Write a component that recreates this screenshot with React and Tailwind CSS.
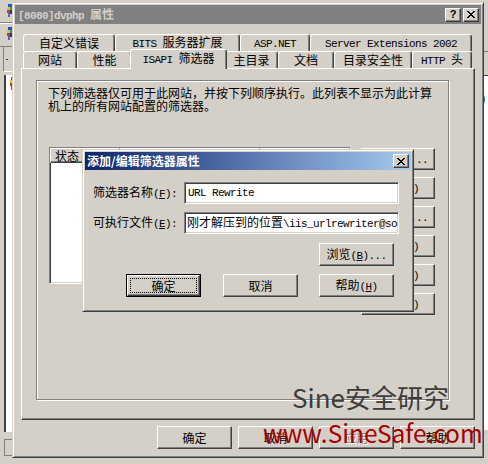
import React from 'react';

// classic win2k bevels
const raised =
  'border border-t-white border-l-white border-r-[#404040] border-b-[#404040] shadow-[inset_-1px_-1px_0_#808080]';
const sunken =
  'border border-t-[#808080] border-l-[#808080] border-r-white border-b-white shadow-[inset_1px_1px_0_#404040,inset_-1px_-1px_0_#d4d0c8]';
const frame =
  'border border-t-[#d4d0c8] border-l-[#d4d0c8] border-r-[#404040] border-b-[#404040] shadow-[inset_1px_1px_0_#fff,inset_-1px_-1px_0_#808080]';
const tab =
  'bg-[#d4d0c8] border-t border-l border-r border-t-white border-l-white border-r-[#404040] shadow-[inset_-1px_0_0_#808080] rounded-t-[3px] flex items-center justify-center whitespace-nowrap';

const L = ({ children, className = '' }) => (
  <span className={`font-['Liberation_Mono',monospace] text-[11px] tracking-[-0.6px] ${className}`}>
    {children}
  </span>
);

const XGlyph = () => (
  <svg width="8" height="7" viewBox="0 0 8 7" shapeRendering="crispEdges" fill="#000">
    <rect x="0" y="0" width="2" height="1" />
    <rect x="6" y="0" width="2" height="1" />
    <rect x="1" y="1" width="2" height="1" />
    <rect x="5" y="1" width="2" height="1" />
    <rect x="2" y="2" width="4" height="1" />
    <rect x="3" y="3" width="2" height="1" />
    <rect x="2" y="4" width="4" height="1" />
    <rect x="1" y="5" width="2" height="1" />
    <rect x="5" y="5" width="2" height="1" />
    <rect x="0" y="6" width="2" height="1" />
    <rect x="6" y="6" width="2" height="1" />
  </svg>
);

const CapButton = ({ children }) => (
  <div className={`w-[16px] h-[14px] bg-[#d4d0c8] flex items-center justify-center ${raised}`}>
    {children}
  </div>
);

const Button = ({ children, size = 'w-[75px] h-[23px]', className = '', disabled = false }) => (
  <div
    className={`${size} bg-[#d4d0c8] flex items-center justify-center whitespace-nowrap leading-[13px] ${raised} ${
      disabled ? 'text-[#808080] [text-shadow:1px_1px_0_#fff]' : ''
    } ${className}`}
  >
    <span>{children}</span>
  </div>
);

const DefaultButton = ({ children, className = '' }) => (
  <div className={`w-[75px] h-[23px] border border-black flex ${className}`}>
    <div className={`flex-1 flex bg-[#d4d0c8] ${raised}`}>
      <div className="flex-1 m-[2px] border border-dotted border-black flex items-center justify-center leading-[13px]">
        <span>{children}</span>
      </div>
    </div>
  </div>
);

const IisIcon = () => (
  <svg width="7" height="14" viewBox="0 0 7 14" shapeRendering="crispEdges">
    <rect x="2" y="0" width="4" height="3" fill="#2a52be" />
    <rect x="1" y="3" width="3" height="3" fill="#e8c020" />
    <rect x="4" y="3" width="3" height="3" fill="#30a040" />
    <rect x="1" y="6" width="3" height="3" fill="#d03030" />
    <rect x="4" y="6" width="2" height="4" fill="#1e3a8a" />
    <rect x="2" y="9" width="2" height="4" fill="#7a5aa0" />
  </svg>
);

function BackLeft() {
  return (
    <div className="w-[12px] h-full flex flex-col">
      <div className="h-[23px] pl-[6px] pt-[4px] border-b border-[#808080]">
        <IisIcon />
      </div>
      <div className="h-[24px] pl-[6px] pt-[3px] border-t border-white border-b border-b-[#808080]">
        <IisIcon />
      </div>
      <div className="h-[25px] ml-[3px] border-l border-[#808080] border-b border-b-white flex items-center pl-[2px]">
        <div className="w-[2px] h-[1px] bg-[#404040]" />
      </div>
      <div className="h-[3px]" />
      <div className="h-[357px] ml-[4px] bg-white border-l-2 border-l-[#404040] pl-[3px] pt-[2px]">
        <IisIcon />
      </div>
      <div className="h-[7px]" />
      <div className="h-[17px] ml-[4px] border border-[#808080] border-r-0" />
    </div>
  );
}

function BackRight() {
  return (
    <div className="w-[4px] h-full flex flex-col">
      <div className="h-[52px] border-b border-[#808080]" />
      <div className="h-[24px] border-b border-[#404040]" />
      <div className="h-[354px] bg-white overflow-hidden text-[11px] leading-[13px] pt-[16px] -indent-[2px]">)</div>
    </div>
  );
}

function MainDialog() {
  const row1 = [
    { w: 'w-[92px]', label: '自定义错误' },
    { w: 'w-[125px]', label: <><L>BITS </L>服务器扩展</> },
    { w: 'w-[70px]', label: <L>ASP.NET</L> },
    { w: 'w-[162px]', label: <L>Server Extensions 2002</L> },
  ];
  const sideButtons = [
    <>添加<L>(D)...</L></>,
    <>删除<L>(R)</L></>,
    <>编辑<L>(I)...</L></>,
    <>禁用<L>(B)</L></>,
    <>上移<L>(U)</L></>,
    <>下移<L>(N)</L></>,
  ];

  return (
    <div className={`w-[472px] h-[456px] mt-[2px] p-[2px] flex flex-col bg-[#d4d0c8] ${frame}`}>
      <div className="h-[19px] bg-[#808080] flex items-center pl-[3px] pr-[2px]">
        <span className="font-bold text-[#d4d0c8] whitespace-nowrap">
          <L className="font-bold">[8080]dvphp </L>属性
        </span>
        <div className="ml-auto flex gap-[2px]">
          <CapButton>
            <span className="font-['Liberation_Sans',sans-serif] font-bold text-[11px] leading-none">?</span>
          </CapButton>
          <CapButton>
            <XGlyph />
          </CapButton>
        </div>
      </div>

      <div className="px-[6px] pt-[10px] flex flex-col">
        <div className="flex h-[17px] ml-[2px]">
          {row1.map((t, i) => (
            <div key={i} className={`${t.w} h-full ${tab}`}>
              <span>{t.label}</span>
            </div>
          ))}
        </div>
        <div className="flex h-[17px] ml-[2px] items-end">
          <div className={`w-[54px] h-full ${tab}`}>网站</div>
          <div className={`w-[55px] h-full ${tab}`}>性能</div>
          <div className={`w-[97px] h-[20px] -mx-[2px] self-start -mt-[2px] relative z-10 pb-[2px] ${tab}`}>
            <span>
              <L>ISAPI </L>筛选器
            </span>
          </div>
          <div className={`w-[53px] h-full ${tab}`}>主目录</div>
          <div className={`w-[56px] h-full ${tab}`}>文档</div>
          <div className={`w-[78px] h-full ${tab}`}>目录安全性</div>
          <div className={`w-[60px] h-full ${tab}`}>
            <span>
              <L>HTTP </L>头
            </span>
          </div>
        </div>

        <div className="h-[352px] border border-t-white border-l-white border-r-[#404040] border-b-[#404040] shadow-[inset_-1px_-1px_0_#808080] pt-[11px] pl-[14px]">
          <div className="w-[413px] h-[320px] border border-[#808080] shadow-[inset_1px_1px_0_#fff,1px_1px_0_#fff] pl-[11px] pt-[5px]">
            <p className="leading-[13px] whitespace-nowrap">
              下列筛选器仅可用于此网站，并按下列顺序执行。此列表不显示为此计算
              <br />
              机上的所有网站配置的筛选器。
            </p>
            <div className="flex items-start mt-[35px]">
              <div className={`ml-[1px] w-[302px] h-[137px] bg-white overflow-hidden ${sunken}`}>
                <div className="flex h-[15px] leading-[13px]">
                  <div className={`w-[70px] bg-[#d4d0c8] pl-[4px] ${raised}`}>状态</div>
                  <div className={`w-[140px] bg-[#d4d0c8] pl-[4px] ${raised}`}>名称</div>
                  <div className={`flex-1 bg-[#d4d0c8] pl-[4px] ${raised}`}>优先级</div>
                </div>
              </div>
              <div className="ml-[10px] mt-[1px] flex flex-col gap-[7px]">
                {sideButtons.map((b, i) => (
                  <Button key={i} size="w-[74px] h-[22px]">
                    {b}
                  </Button>
                ))}
              </div>
            </div>
          </div>
        </div>
      </div>

      <div className="mt-[6px] pr-[6px] flex justify-end gap-[6px]">
        <Button>确定</Button>
        <Button>取消</Button>
        <Button disabled>应用</Button>
        <Button>帮助</Button>
      </div>
    </div>
  );
}

function FilterDialog() {
  return (
    <div className={`absolute left-[82px] top-[149px] w-[332px] h-[163px] p-[2px] flex flex-col bg-[#d4d0c8] ${frame}`}>
      <div className="h-[18px] bg-[linear-gradient(to_right,#0a246a,#a6caf0)] flex items-center pl-[2px] pr-[2px]">
        <span className="text-white font-bold whitespace-nowrap">添加/编辑筛选器属性</span>
        <div className="ml-auto">
          <CapButton>
            <XGlyph />
          </CapButton>
        </div>
      </div>

      <div className="pl-[8px] flex flex-col">
        <div className="mt-[12px] flex items-center">
          <span className="w-[91px] whitespace-nowrap">
            筛选器名称<L>(<u>F</u>):</L>
          </span>
          <div className={`w-[215px] h-[22px] bg-white pl-[3px] flex items-center ${sunken}`}>
            <L>URL Rewrite</L>
          </div>
        </div>
        <div className="mt-[8px] flex items-center">
          <span className="w-[91px] whitespace-nowrap">
            可执行文件<L>(<u>E</u>):</L>
          </span>
          <div className={`w-[215px] h-[22px] bg-white pl-[2px] flex items-center overflow-hidden whitespace-nowrap ${sunken}`}>
            <span>
              刚才解压到的位置<L>\iis_urlrewriter@so</L>
            </span>
          </div>
        </div>
        <div className="mt-[9px] ml-[226px]">
          <Button>
            浏览<L>(<u>B</u>)...</L>
          </Button>
        </div>
        <div className="mt-[8px] flex">
          <DefaultButton className="ml-[33px]">确定</DefaultButton>
          <Button className="ml-[22px]">取消</Button>
          <Button className="ml-[21px]">
            帮助<L>(<u>H</u>)</L>
          </Button>
        </div>
      </div>
    </div>
  );
}

export default function App() {
  return (
    <div className="relative w-[488px] h-[464px] overflow-hidden bg-[#d4d0c8] text-[12px] text-black font-['Noto_Sans_CJK_SC',sans-serif] flex">
      <BackLeft />
      <MainDialog />
      <BackRight />
      <FilterDialog />

      {/* watermark */}
      <div className="absolute left-[292px] top-[384px] text-[26px] leading-none text-[#3c3c3c] whitespace-nowrap">
        Sine安全研究
      </div>
      <div className="absolute left-[263px] top-[421px] text-[24.5px] leading-none text-[#a80000] whitespace-nowrap">
        www.SineSafe.com
      </div>
    </div>
  );
}
